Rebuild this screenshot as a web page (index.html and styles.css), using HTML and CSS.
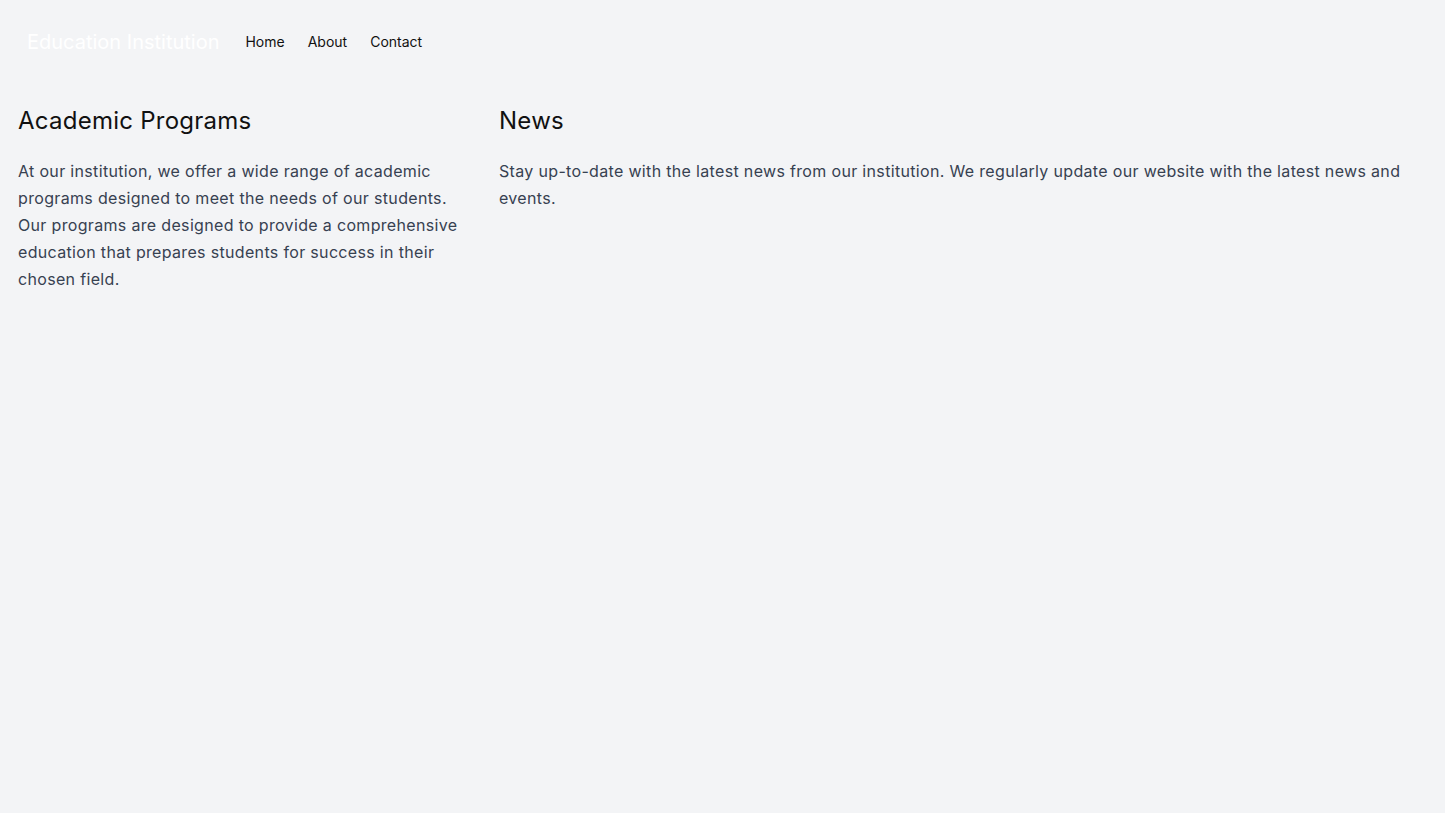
FILE: index.html
```html
<!DOCTYPE html>
<html lang="en">
<head>
    <meta charset="UTF-8">
    <meta name="viewport" content="width=device-width, initial-scale=1.0">
    <title>Education Institution</title>
    <link rel="stylesheet" href="styles.css">
</head>
<body>
    <header class="site-header">
        <div class="brand">Education Institution</div>
        <nav class="nav">
            <a href="#">Home</a>
            <a href="#">About</a>
            <a href="#">Contact</a>
        </nav>
    </header>

    <main class="content">
        <section class="column">
            <h2>Academic Programs</h2>
            <p>At our institution, we offer a wide range of academic programs designed to meet the needs of our students. Our programs are designed to provide a comprehensive education that prepares students for success in their chosen field.</p>
        </section>
        <section class="column">
            <h2>News</h2>
            <p>Stay up-to-date with the latest news from our institution. We regularly update our website with the latest news and events.</p>
        </section>
    </main>
</body>
</html>
```

FILE: styles.css
```css
body {
    margin: 0;
    background-color: #f3f4f6;
    font-family: Inter, "Liberation Sans", sans-serif;
    color: #111;
    min-height: 100vh;
}
.site-header {
    display: flex;
    align-items: center;
    padding: 24px 27px;
    height: 34px;
}
.brand {
    color: #fff;
    font-size: 20px;
    margin-right: 26px;
    padding-top: 2px;
}
.nav {
    display: flex;
    gap: 23px;
}
.nav a {
    color: #111;
    text-decoration: none;
    font-size: 14px;
}
.content {
    display: grid;
    grid-template-columns: 458px 1fr;
    column-gap: 23px;
    padding: 23px 18px;
}
.column h2 {
    font-size: 24px;
    font-weight: normal;
    line-height: 32px;
    letter-spacing: 0.25px;
    margin: 0 0 21px;
}
.column p {
    margin: 0;
    font-size: 16px;
    line-height: 27px;
    letter-spacing: 0.33px;
    color: #374151;
}
```
